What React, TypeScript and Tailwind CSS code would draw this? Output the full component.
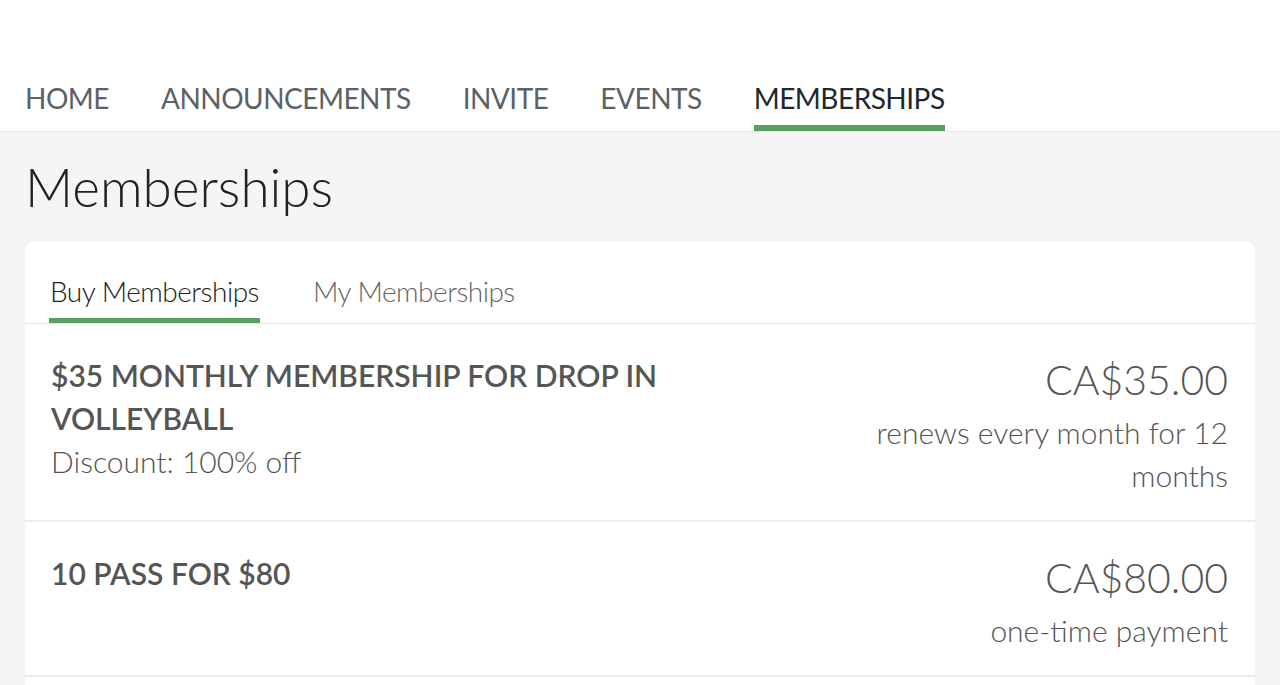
import React from 'react';

const navItems = ['HOME', 'ANNOUNCEMENTS', 'INVITE', 'EVENTS', 'MEMBERSHIPS'];

const plans = [
  {
    title: '$35 MONTHLY MEMBERSHIP FOR DROP IN VOLLEYBALL',
    note: 'Discount: 100% off',
    price: 'CA$35.00',
    terms: 'renews every month for 12 months',
  },
  {
    title: '10 PASS FOR $80',
    note: '',
    price: 'CA$80.00',
    terms: 'one-time payment',
  },
];

export default function App() {
  return (
    <div className="min-h-[685px] bg-[#f5f5f5] font-['Lato','Liberation_Sans',sans-serif]">
      {/* Top navigation */}
      <nav className="flex h-[132px] items-end gap-[52px] border-b border-[#e6e6e6] bg-white px-[25px]">
        {navItems.map((item) => {
          const active = item === 'MEMBERSHIPS';
          return (
            <div
              key={item}
              className={
                active
                  ? 'border-b-[6px] border-[#5a9f5b] pb-[10px] text-[28px] leading-[34px] tracking-[-0.5px] text-[#1e2830]'
                  : 'border-b-[6px] border-transparent pb-[10px] text-[28px] leading-[34px] tracking-[-0.5px] text-[#5b6166]'
              }
            >
              {item}
            </div>
          );
        })}
      </nav>

      <main className="px-[25px]">
        <h1 className="pt-[21px] pb-[22px] text-[53px] font-light leading-[67px] text-[#222]">Memberships</h1>

        <div className="overflow-hidden rounded-lg bg-white pb-10">
          {/* Tabs */}
          <div className="flex gap-[52px] border-b border-[#e6e6e6] px-6 pt-[32px]">
            <div className="border-b-[5px] border-[#5a9f5b] px-[1px] pb-[10px] text-[28px] font-light leading-[34px] tracking-[-0.5px] text-[#222]">
              Buy Memberships
            </div>
            <div className="border-b-[5px] border-transparent px-[1px] pb-[10px] text-[28px] font-light leading-[34px] tracking-[-0.5px] text-[#666]">
              My Memberships
            </div>
          </div>

          {plans.map((plan) => (
            <div
              key={plan.price}
              className="flex justify-between gap-10 border-b-2 border-[#ececec] pl-[26px] pr-[27px] pt-[30px] pb-[23px] text-[#555]"
            >
              <div className="max-w-[680px]">
                <div className="text-[30px] font-semibold leading-[43px]">{plan.title}</div>
                {plan.note && <div className="text-[30px] font-light leading-[43px]">{plan.note}</div>}
              </div>
              <div className="max-w-[380px] text-right">
                <div className="text-[41px] font-light leading-[52px]">{plan.price}</div>
                <div className="mt-[5px] text-[30px] font-light leading-[43px]">{plan.terms}</div>
              </div>
            </div>
          ))}
        </div>
      </main>
    </div>
  );
}
